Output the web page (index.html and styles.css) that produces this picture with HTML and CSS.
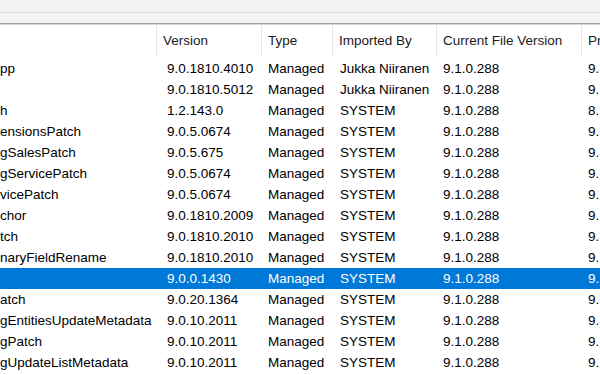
FILE: index.html
```html
<!DOCTYPE html>
<html lang="en">
<head>
<meta charset="utf-8">
<title>Solutions</title>
<link rel="stylesheet" href="styles.css">
</head>
<body>
<div class="toolbar"></div>
<div class="strip"></div>
<div class="list">
  <div class="header cols">
    <div class="hcell"></div>
    <div class="hcell">Version</div>
    <div class="hcell">Type</div>
    <div class="hcell">Imported By</div>
    <div class="hcell">Current File Version</div>
    <div class="hcell last">Pr</div>
  </div>
  <div class="row cols"><span class="name">pp</span><span class="ver">9.0.1810.4010</span><span>Managed</span><span class="by">Jukka Niiranen</span><span>9.1.0.288</span><span>9.</span></div>
  <div class="row cols"><span class="name"></span><span class="ver">9.0.1810.5012</span><span>Managed</span><span class="by">Jukka Niiranen</span><span>9.1.0.288</span><span>9.</span></div>
  <div class="row cols"><span class="name">h</span><span class="ver">1.2.143.0</span><span>Managed</span><span class="by">SYSTEM</span><span>9.1.0.288</span><span>8.</span></div>
  <div class="row cols"><span class="name">ensionsPatch</span><span class="ver">9.0.5.0674</span><span>Managed</span><span class="by">SYSTEM</span><span>9.1.0.288</span><span>9.</span></div>
  <div class="row cols"><span class="name">gSalesPatch</span><span class="ver">9.0.5.675</span><span>Managed</span><span class="by">SYSTEM</span><span>9.1.0.288</span><span>9.</span></div>
  <div class="row cols"><span class="name">gServicePatch</span><span class="ver">9.0.5.0674</span><span>Managed</span><span class="by">SYSTEM</span><span>9.1.0.288</span><span>9.</span></div>
  <div class="row cols"><span class="name">vicePatch</span><span class="ver">9.0.5.0674</span><span>Managed</span><span class="by">SYSTEM</span><span>9.1.0.288</span><span>9.</span></div>
  <div class="row cols"><span class="name">chor</span><span class="ver">9.0.1810.2009</span><span>Managed</span><span class="by">SYSTEM</span><span>9.1.0.288</span><span>9.</span></div>
  <div class="row cols"><span class="name">tch</span><span class="ver">9.0.1810.2010</span><span>Managed</span><span class="by">SYSTEM</span><span>9.1.0.288</span><span>9.</span></div>
  <div class="row cols"><span class="name">naryFieldRename</span><span class="ver">9.0.1810.2010</span><span>Managed</span><span class="by">SYSTEM</span><span>9.1.0.288</span><span>9.</span></div>
  <div class="row cols selected"><span class="name"></span><span class="ver">9.0.0.1430</span><span>Managed</span><span class="by">SYSTEM</span><span>9.1.0.288</span><span>9.</span></div>
  <div class="row cols"><span class="name">atch</span><span class="ver">9.0.20.1364</span><span>Managed</span><span class="by">SYSTEM</span><span>9.1.0.288</span><span>9.</span></div>
  <div class="row cols"><span class="name">gEntitiesUpdateMetadata</span><span class="ver">9.0.10.2011</span><span>Managed</span><span class="by">SYSTEM</span><span>9.1.0.288</span><span>9.</span></div>
  <div class="row cols"><span class="name">gPatch</span><span class="ver">9.0.10.2011</span><span>Managed</span><span class="by">SYSTEM</span><span>9.1.0.288</span><span>9.</span></div>
  <div class="row cols"><span class="name">gUpdateListMetadata</span><span class="ver">9.0.10.2011</span><span>Managed</span><span class="by">SYSTEM</span><span>9.1.0.288</span><span>9.</span></div>
</div>
</body>
</html>
```
FILE: styles.css
```css
html, body {
  margin: 0;
  padding: 0;
  width: 600px;
  height: 375px;
  overflow: hidden;
  background: #ffffff;
}
body {
  font-family: "Liberation Sans", Arial, sans-serif;
  font-size: 13.5px;
  color: #000000;
}
.toolbar {
  height: 12px;
  background: #f3f3f3;
  border-bottom: 1px solid #dcdcdc;
}
.strip {
  height: 10px;
  background: #f3f3f3;
  border-bottom: 1px solid #a0a0a0;
}
.list {
  border-top: 1px solid #d6d6d6;
  background: #ffffff;
}
.cols {
  display: grid;
  grid-template-columns: 157px 105px 71px 104px 145px 1fr;
}
.header {
  height: 33px;
  align-items: start;
}
.hcell {
  height: 31px;
  line-height: 31px;
  padding-left: 6px;
  border-right: 1px solid #e5e5e5;
  color: #1a1a1a;
  white-space: nowrap;
  overflow: hidden;
}
.hcell.last {
  border-right: none;
}
.row {
  height: 21px;
  line-height: 21px;
}
.row span {
  padding-left: 6px;
  white-space: nowrap;
  overflow: hidden;
}
.row span.name {
  padding-left: 0;
}
.row span.ver {
  padding-left: 10px;
}
.row span.by {
  padding-left: 7px;
}
.row.selected {
  background: #0078d7;
  color: #ffffff;
}
```
